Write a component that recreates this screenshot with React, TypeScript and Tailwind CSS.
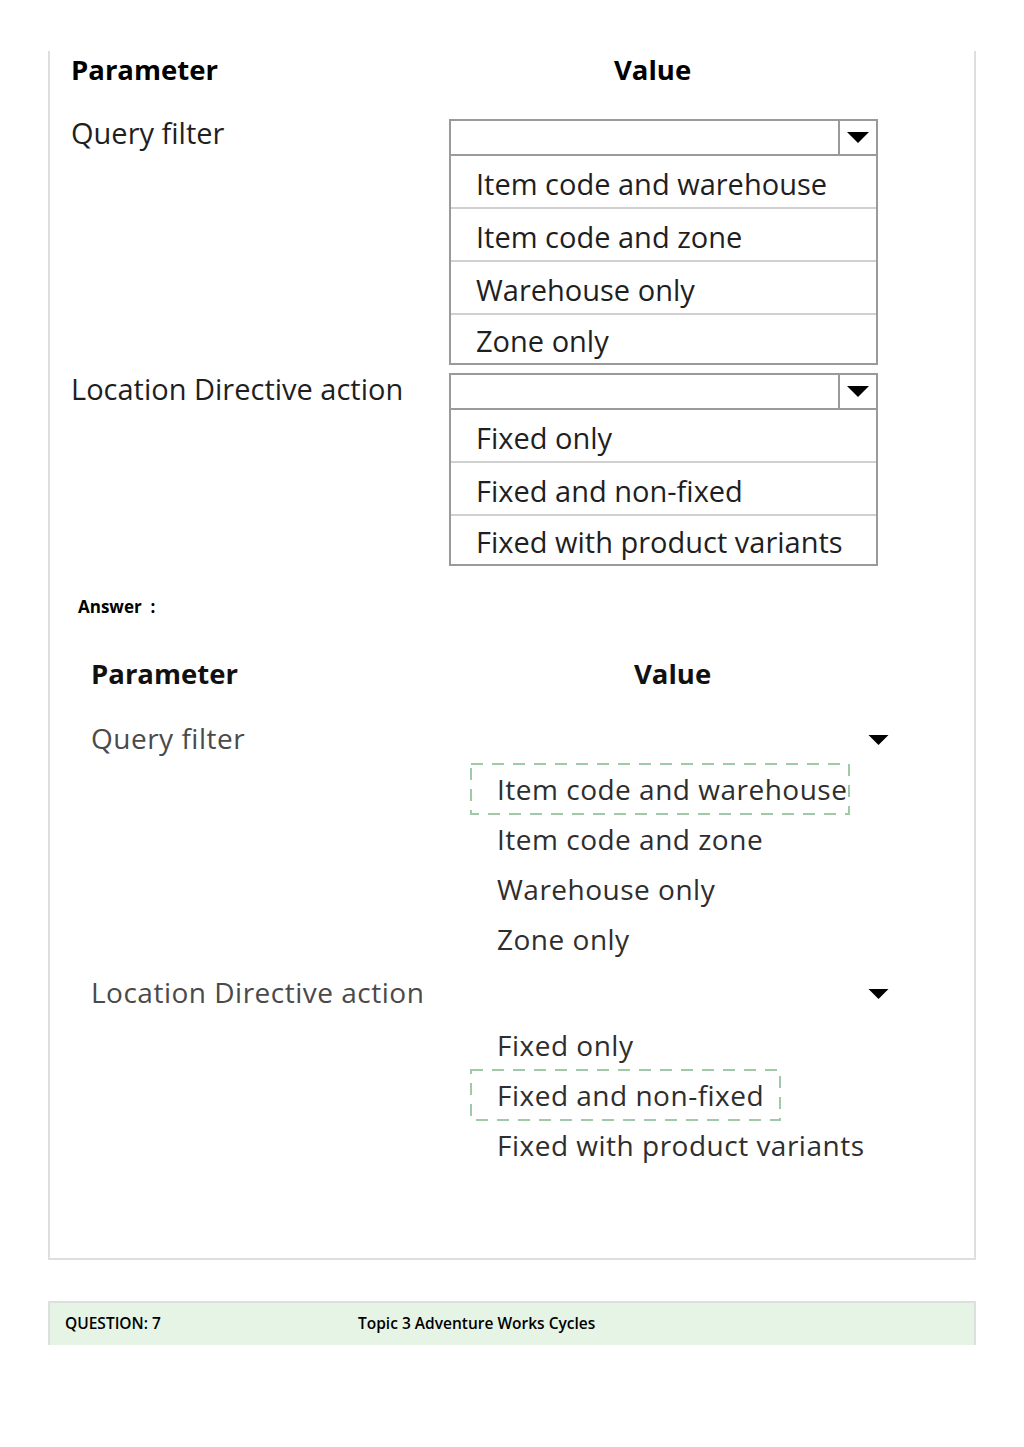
import React from 'react';

const sans = { fontFamily: '"Open Sans", "Noto Sans", sans-serif' };

const queryOptions = ['Item code and warehouse', 'Item code and zone', 'Warehouse only', 'Zone only'];
const actionOptions = ['Fixed only', 'Fixed and non-fixed', 'Fixed with product variants'];

const Caret: React.FC<{ className?: string }> = ({ className }) => (
  <svg className={className} viewBox="0 0 22 11" fill="currentColor">
    <path d="M0 0h22L11 11z" />
  </svg>
);

const Dropdown: React.FC<{ options: string[]; rowHeights: string[] }> = ({ options, rowHeights }) => (
  <div className="w-[429px] border-2 border-[#9a9a9a] bg-white">
    <div className="flex h-[35px] border-b-2 border-[#9a9a9a]">
      <div className="flex-1" />
      <div className="flex w-[38px] items-center justify-center border-l-2 border-[#9a9a9a] text-black">
        <Caret className="h-[11px] w-[22px]" />
      </div>
    </div>
    {options.map((opt, i) => (
      <div
        key={opt}
        className={`flex items-center whitespace-nowrap pl-[25px] pt-[4px] text-[29px] text-[#1f1f1f] ${rowHeights[i]} ${
          i < options.length - 1 ? 'border-b-2 border-[#d0d0d0]' : ''
        }`}
      >
        {opt}
      </div>
    ))}
  </div>
);

const AnswerOption: React.FC<{ text: string; picked?: boolean; boxWidth?: string }> = ({ text, picked, boxWidth }) => (
  <div className="flex h-[50px] items-center pl-[420px]">
    {picked ? (
      <div className={`relative flex h-[52px] items-center pl-[27px] ${boxWidth}`}>
        <svg className="absolute inset-0 h-full w-full" fill="none">
          <rect
            x="1"
            y="1"
            width="calc(100% - 2px)"
            height="calc(100% - 2px)"
            stroke="#9fcaa8"
            strokeWidth="2"
            strokeDasharray="12 9"
          />
        </svg>
        <span className="whitespace-nowrap text-[28px] tracking-[0.5px] text-[#2e2e2e]">{text}</span>
      </div>
    ) : (
      <span className="whitespace-nowrap pl-[27px] text-[28px] tracking-[0.5px] text-[#2e2e2e]">{text}</span>
    )}
  </div>
);

const AnswerLabel: React.FC<{ text: string; height: string }> = ({ text, height }) => (
  <div className={`flex items-center pl-[41px] ${height}`}>
    <span className="w-[777px] whitespace-nowrap text-[28px] tracking-[0.5px] text-[#4a4a4a]">{text}</span>
    <Caret className="mt-[4px] h-[10px] w-[21px] text-black" />
  </div>
);

export default function App() {
  return (
    <div className="min-h-[1447px] bg-white" style={sans}>
      <div className="px-[48px] pt-[44px]">
        {/* question card */}
        <div className="border-x-2 border-b-2 border-[#dedede] pb-[88px]">
          <div className="pl-[21px]">
            <div className="mt-[7px] grid grid-cols-[378px_429px] leading-[38px]">
              <div className="text-[27.5px] font-bold text-black">Parameter</div>
              <div className="pl-[165px] text-[27.5px] font-bold text-black">Value</div>
            </div>

            <div className="mt-[30px] grid grid-cols-[378px_429px]">
              <div className="-mt-[4px] whitespace-nowrap text-[29px] leading-[36px] text-[#1f1f1f]">Query filter</div>
              <Dropdown options={queryOptions} rowHeights={['h-[53px]', 'h-[53px]', 'h-[53px]', 'h-[48px]']} />
            </div>

            <div className="mt-[8px] grid grid-cols-[378px_429px]">
              <div className="-mt-[2px] whitespace-nowrap text-[29px] leading-[36px] text-[#1f1f1f]">
                Location Directive action
              </div>
              <Dropdown options={actionOptions} rowHeights={['h-[53px]', 'h-[53px]', 'h-[48px]']} />
            </div>
          </div>

          <div className="mt-[29px] whitespace-pre pl-[28px] text-[17px] font-bold leading-[24px] text-black">
            {'Answer  :'}
          </div>

          <div className="mt-[36px] flex pl-[41px] leading-[38px]">
            <div className="w-[543px] text-[27.5px] font-bold text-[#111]">Parameter</div>
            <div className="text-[27.5px] font-bold text-[#111]">Value</div>
          </div>

          <div className="mt-[19px]">
            <AnswerLabel text="Query filter" height="h-[52px]" />
            <AnswerOption text="Item code and warehouse" picked boxWidth="w-[380px]" />
            <AnswerOption text="Item code and zone" />
            <AnswerOption text="Warehouse only" />
            <AnswerOption text="Zone only" />
            <AnswerLabel text="Location Directive action" height="h-[56px]" />
            <AnswerOption text="Fixed only" />
            <AnswerOption text="Fixed and non-fixed" picked boxWidth="w-[311px]" />
            <AnswerOption text="Fixed with product variants" />
          </div>
        </div>

        {/* next question bar */}
        <div className="mt-[41px] flex h-[44px] items-center border-x-2 border-t-2 border-[#dedede] bg-[#e6f4e6] text-[15.5px] font-semibold text-black">
          <span className="w-[308px] pl-[15px]">QUESTION: 7</span>
          <span>Topic 3 Adventure Works Cycles</span>
        </div>
      </div>
    </div>
  );
}
